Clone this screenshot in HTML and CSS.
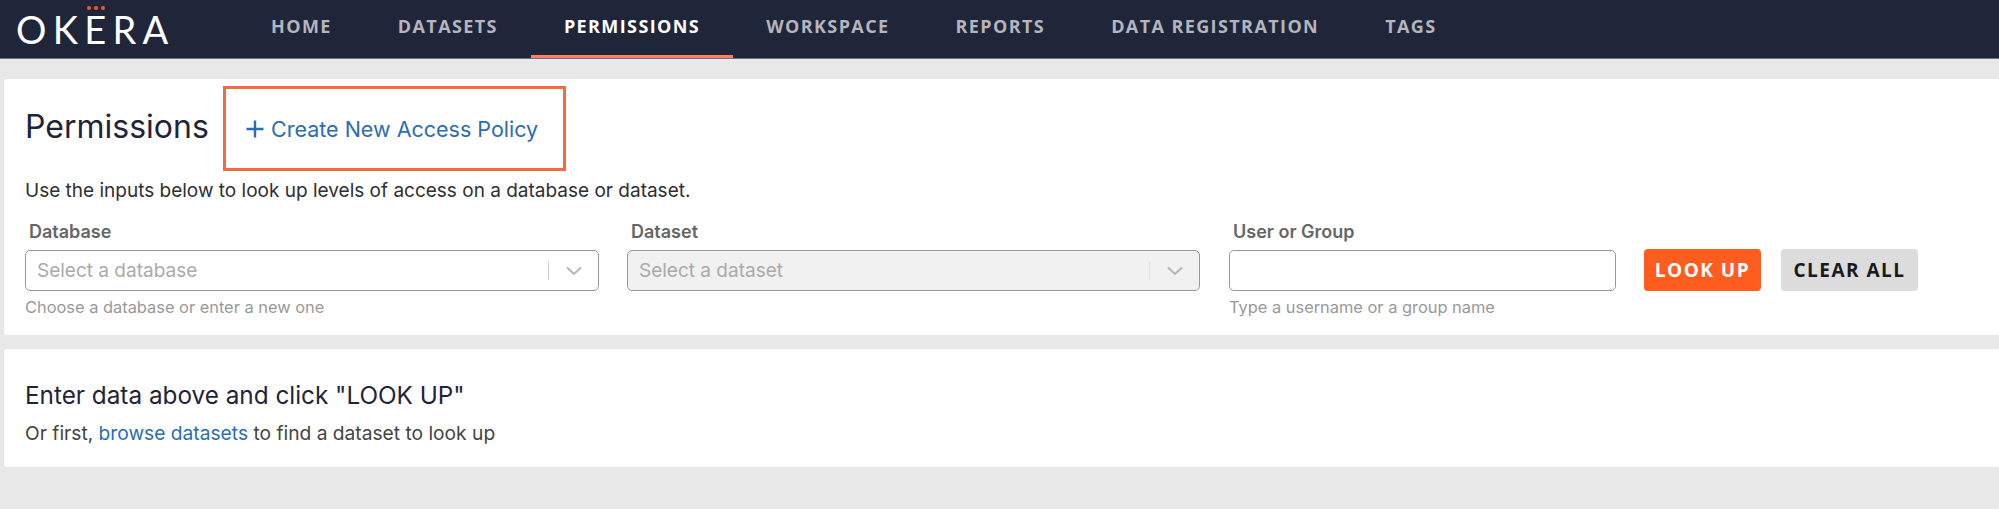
FILE: index.html
```html
<!DOCTYPE html>
<html lang="en">
<head>
<meta charset="utf-8">
<title>Permissions</title>
<link rel="stylesheet" href="styles.css">
</head>
<body>
<header class="topbar">
  <div class="logo"><span class="logo-dots"><i></i><i></i><i></i></span><span class="logo-text">OKERA</span></div>
  <nav class="nav">
    <a class="nav-item">HOME</a>
    <a class="nav-item">DATASETS</a>
    <a class="nav-item active">PERMISSIONS</a>
    <a class="nav-item">WORKSPACE</a>
    <a class="nav-item">REPORTS</a>
    <a class="nav-item">DATA REGISTRATION</a>
    <a class="nav-item">TAGS</a>
  </nav>
</header>
<main class="page">
  <section class="card lookup">
    <div class="title-row">
      <h1 class="title">Permissions</h1>
      <div class="callout"><a class="create-link"><svg class="plus" width="18" height="18" viewBox="0 0 18 18"><path d="M9 0.5 V17.5 M0.5 9 H17.5" fill="none" stroke="#2a6db5" stroke-width="2.4"/></svg>Create New Access Policy</a></div>
    </div>
    <p class="intro">Use the inputs below to look up levels of access on a database or dataset.</p>
    <div class="form-row">
      <div class="field field-select first">
        <label class="label">Database</label>
        <div class="select">
          <span class="placeholder">Select a database</span>
          <span class="sep"></span>
          <svg class="chev" width="18" height="10" viewBox="0 0 18 10"><path d="M2 1.5 L9 8 L16 1.5" fill="none" stroke="#b5b5b5" stroke-width="2"/></svg>
        </div>
        <div class="hint">Choose a database or enter a new one</div>
      </div>
      <div class="field field-select">
        <label class="label">Dataset</label>
        <div class="select disabled">
          <span class="placeholder">Select a dataset</span>
          <span class="sep"></span>
          <svg class="chev" width="18" height="10" viewBox="0 0 18 10"><path d="M2 1.5 L9 8 L16 1.5" fill="none" stroke="#b5b5b5" stroke-width="2"/></svg>
        </div>
      </div>
      <div class="field field-input">
        <label class="label">User or Group</label>
        <div class="input"></div>
        <div class="hint">Type a username or a group name</div>
      </div>
      <div class="actions">
        <button class="btn btn-primary">LOOK UP</button>
        <button class="btn btn-secondary">CLEAR ALL</button>
      </div>
    </div>
  </section>
  <section class="card empty">
    <h2 class="empty-title">Enter data above and click "LOOK UP"</h2>
    <p class="empty-text">Or first, <a class="text-link">browse datasets</a> to find a dataset to look up</p>
  </section>
</main>
</body>
</html>
```
FILE: styles.css
```css
* { box-sizing: border-box; }
html, body { margin: 0; height: 100%; }
body {
  background: #e8e8e8;
  font-family: Inter, "Liberation Sans", sans-serif;
  color: #1f2438;
  overflow: hidden;
}
.topbar {
  height: 59px;
  background: #20263a;
  border-bottom: 1px solid #6e7186;
  display: flex;
  padding-left: 16px;
}
.logo {
  position: relative;
  width: 222px;
  flex: none;
}
.logo-text {
  display: block;
  font-family: Lato, sans-serif;
  font-weight: 400;
  font-size: 38px;
  line-height: 58px;
  letter-spacing: 6.3px;
  color: #fff;
}
.logo-dots {
  position: absolute;
  left: 71px;
  top: 6px;
  display: flex;
  gap: 3px;
}
.logo-dots i {
  width: 4px;
  height: 4px;
  border-radius: 50%;
  background: #ee5a2b;
}
.nav { display: flex; height: 59px; }
.nav-item {
  padding: 0 33px;
  height: 58px;
  line-height: 52px;
  font-family: "Open Sans", sans-serif;
  font-size: 18px;
  font-weight: 700;
  letter-spacing: 1.4px;
  color: #b4b5bd;
  white-space: nowrap;
}
.nav-item.active {
  color: #fff;
  border-bottom: 3px solid #fb7f66;
}
.page {
  padding: 20px 0 0 4px;
  display: flex;
  flex-direction: column;
  gap: 14px;
}
.card {
  background: #fff;
  border-radius: 3px 0 0 3px;
  padding-left: 21px;
}
.lookup { height: 256px; padding-top: 7px; }
.title-row { display: flex; align-items: center; }
.title {
  margin: -3px 0 0;
  font-size: 32px;
  font-weight: 400;
  line-height: 40px;
  color: #1f2438;
  width: 198px;
}
.callout {
  width: 343px;
  height: 85px;
  border: 3px solid #f16d3f;
  display: flex;
  align-items: center;
  padding-left: 20px;
}
.create-link {
  display: flex;
  align-items: center;
  gap: 7px;
  font-size: 21.5px;
  color: #2a6db5;
  white-space: nowrap;
}
.plus { flex: none; }
.intro {
  margin: 8px 0 0;
  font-size: 19px;
  line-height: 24px;
  color: #2e2e33;
}
.form-row { display: flex; margin-top: 17px; align-items: flex-start; }
.field-select { width: 573px; margin-right: 29px; }
.field-select.first { width: 574px; margin-right: 28px; }
.field-input { width: 387px; margin-right: 28px; }
.label {
  display: block;
  padding-left: 4px;
  font-size: 18px;
  font-weight: 600;
  line-height: 24px;
  color: #666;
}
.select, .input {
  margin-top: 6px;
  height: 41px;
  border: 1px solid #999;
  border-radius: 5px;
  background: #fff;
}
.select {
  display: flex;
  align-items: center;
  padding: 0 15px 0 11px;
}
.select.disabled { background: #f1f1f1; }
.placeholder { flex: 1; font-size: 19px; color: #aaa; }
.sep { width: 1px; height: 18px; background: #ccc; margin-right: 16px; }
.disabled .sep { background: #e2e2e2; }
.hint {
  margin-top: 5px;
  font-size: 16.4px;
  line-height: 22px;
  color: #999;
}
.actions { display: flex; gap: 20px; margin-top: 29px; }
.btn {
  height: 42px;
  border: 0;
  border-radius: 4px;
  font-family: "Open Sans", sans-serif;
  font-size: 19px;
  font-weight: 700;
  letter-spacing: 1.5px;
  padding: 0;
}
.btn-primary { width: 117px; background: #ff5c20; color: #fff; }
.btn-secondary { width: 137px; background: #dcdcdc; color: #1a1a1a; }
.empty { height: 118px; padding-top: 31px; }
.empty-title {
  margin: 0;
  font-size: 24.3px;
  font-weight: 400;
  line-height: 30px;
  color: #1f2438;
}
.empty-text {
  margin: 10px 0 0;
  font-size: 19.2px;
  line-height: 26px;
  color: #444;
}
.text-link { color: #2a6db5; }
```
